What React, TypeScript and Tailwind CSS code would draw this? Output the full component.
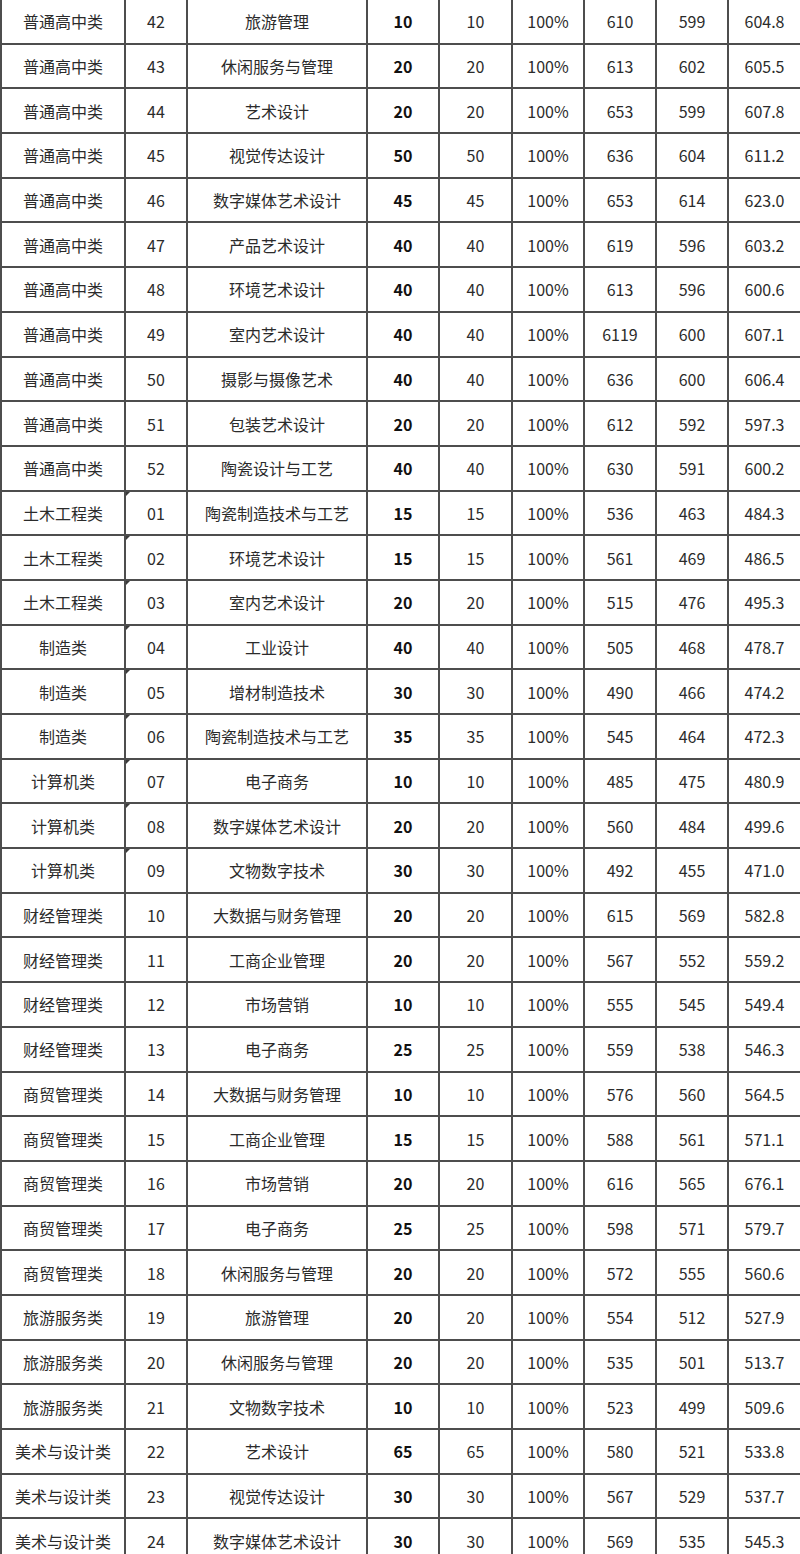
type Row = [string, string, string, string, string, string, string, string, string];

const rows: Row[] = [
  ["普通高中类", "42", "旅游管理", "10", "10", "100%", "610", "599", "604.8"],
  ["普通高中类", "43", "休闲服务与管理", "20", "20", "100%", "613", "602", "605.5"],
  ["普通高中类", "44", "艺术设计", "20", "20", "100%", "653", "599", "607.8"],
  ["普通高中类", "45", "视觉传达设计", "50", "50", "100%", "636", "604", "611.2"],
  ["普通高中类", "46", "数字媒体艺术设计", "45", "45", "100%", "653", "614", "623.0"],
  ["普通高中类", "47", "产品艺术设计", "40", "40", "100%", "619", "596", "603.2"],
  ["普通高中类", "48", "环境艺术设计", "40", "40", "100%", "613", "596", "600.6"],
  ["普通高中类", "49", "室内艺术设计", "40", "40", "100%", "6119", "600", "607.1"],
  ["普通高中类", "50", "摄影与摄像艺术", "40", "40", "100%", "636", "600", "606.4"],
  ["普通高中类", "51", "包装艺术设计", "20", "20", "100%", "612", "592", "597.3"],
  ["普通高中类", "52", "陶瓷设计与工艺", "40", "40", "100%", "630", "591", "600.2"],
  ["土木工程类", "01", "陶瓷制造技术与工艺", "15", "15", "100%", "536", "463", "484.3"],
  ["土木工程类", "02", "环境艺术设计", "15", "15", "100%", "561", "469", "486.5"],
  ["土木工程类", "03", "室内艺术设计", "20", "20", "100%", "515", "476", "495.3"],
  ["制造类", "04", "工业设计", "40", "40", "100%", "505", "468", "478.7"],
  ["制造类", "05", "增材制造技术", "30", "30", "100%", "490", "466", "474.2"],
  ["制造类", "06", "陶瓷制造技术与工艺", "35", "35", "100%", "545", "464", "472.3"],
  ["计算机类", "07", "电子商务", "10", "10", "100%", "485", "475", "480.9"],
  ["计算机类", "08", "数字媒体艺术设计", "20", "20", "100%", "560", "484", "499.6"],
  ["计算机类", "09", "文物数字技术", "30", "30", "100%", "492", "455", "471.0"],
  ["财经管理类", "10", "大数据与财务管理", "20", "20", "100%", "615", "569", "582.8"],
  ["财经管理类", "11", "工商企业管理", "20", "20", "100%", "567", "552", "559.2"],
  ["财经管理类", "12", "市场营销", "10", "10", "100%", "555", "545", "549.4"],
  ["财经管理类", "13", "电子商务", "25", "25", "100%", "559", "538", "546.3"],
  ["商贸管理类", "14", "大数据与财务管理", "10", "10", "100%", "576", "560", "564.5"],
  ["商贸管理类", "15", "工商企业管理", "15", "15", "100%", "588", "561", "571.1"],
  ["商贸管理类", "16", "市场营销", "20", "20", "100%", "616", "565", "676.1"],
  ["商贸管理类", "17", "电子商务", "25", "25", "100%", "598", "571", "579.7"],
  ["商贸管理类", "18", "休闲服务与管理", "20", "20", "100%", "572", "555", "560.6"],
  ["旅游服务类", "19", "旅游管理", "20", "20", "100%", "554", "512", "527.9"],
  ["旅游服务类", "20", "休闲服务与管理", "20", "20", "100%", "535", "501", "513.7"],
  ["旅游服务类", "21", "文物数字技术", "10", "10", "100%", "523", "499", "509.6"],
  ["美术与设计类", "22", "艺术设计", "65", "65", "100%", "580", "521", "533.8"],
  ["美术与设计类", "23", "视觉传达设计", "30", "30", "100%", "567", "529", "537.7"],
  ["美术与设计类", "24", "数字媒体艺术设计", "30", "30", "100%", "569", "535", "545.3"],
];

const cell = "flex items-center justify-center border-r-2 border-[#4d4d4d] whitespace-nowrap";

export default function App() {
  return (
    <div
      className="w-[800px] bg-white text-[16px] text-[#2b2b2b] overflow-hidden"
      style={{ fontFamily: '"Noto Sans CJK SC", "Noto Sans", sans-serif' }}
    >
      {rows.map((r, i) => {
        // text-formatted codes 01-09 carry the little corner marker
        const marked = r[1].startsWith("0");
        return (
          <div
            key={i}
            className="grid grid-cols-[124px_62px_180px_72px_73px_72px_72px_72px_1fr] h-[44.7px] border-b-2 border-l-2 border-[#4d4d4d]"
          >
            <div className={cell}>{r[0]}</div>
            <div className={`${cell} relative`}>
              {marked && (
                <span className="absolute left-0 top-0 w-0 h-0 border-t-[4px] border-r-[4px] border-t-[#3a3a3a] border-r-transparent" />
              )}
              {r[1]}
            </div>
            <div className={cell}>{r[2]}</div>
            <div className={`${cell} font-bold text-[#111]`}>{r[3]}</div>
            <div className={cell}>{r[4]}</div>
            <div className={cell}>{r[5]}</div>
            <div className={cell}>{r[6]}</div>
            <div className={cell}>{r[7]}</div>
            <div className="flex items-center justify-center whitespace-nowrap">{r[8]}</div>
          </div>
        );
      })}
    </div>
  );
}
